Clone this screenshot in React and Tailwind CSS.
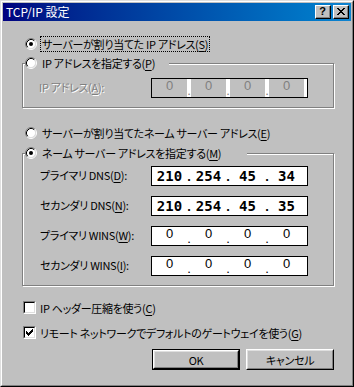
import React, { Fragment } from "react";

const JP = "font-['Noto_Sans_CJK_JP',sans-serif] [font-feature-settings:'palt']";

function U({ children }) {
  return <span className="underline decoration-1 underline-offset-[2px]">{children}</span>;
}

function Radio({ checked }) {
  return (
    <svg width="12" height="12" viewBox="0 0 12 12" className="shrink-0 block">
      <circle cx="6" cy="6" r="4.6" fill="#fff" />
      <path d="M2.11 9.89 A5.5 5.5 0 0 1 9.89 2.11" stroke="#808080" fill="none" />
      <path d="M9.89 2.11 A5.5 5.5 0 0 1 2.11 9.89" stroke="#fff" fill="none" />
      <path d="M2.82 9.18 A4.5 4.5 0 0 1 9.18 2.82" stroke="#000" fill="none" />
      <path d="M9.18 2.82 A4.5 4.5 0 0 1 2.82 9.18" stroke="#dfdfdf" fill="none" />
      {checked && <circle cx="6" cy="6" r="2" fill="#000" />}
    </svg>
  );
}

function CheckBox({ checked }) {
  const tops = [2, 3, 4, 3, 2, 1, 0];
  return (
    <div className="w-[13px] h-[13px] shrink-0 border border-t-[#808080] border-l-[#808080] border-r-white border-b-white">
      <div className="w-full h-full border border-t-black border-l-black border-r-[#dfdfdf] border-b-[#dfdfdf] bg-white flex items-center justify-center">
        {checked && (
          <svg width="7" height="7" viewBox="0 0 7 7" shapeRendering="crispEdges" className="block">
            {tops.map((t, i) => (
              <rect key={i} x={i} y={t} width="1" height="3" fill="#000" />
            ))}
          </svg>
        )}
      </div>
    </div>
  );
}

function CapBtn({ children, className = "" }) {
  return (
    <div className={`w-[16px] h-[14px] shrink-0 bg-[#c0c0c0] border border-t-white border-l-white border-r-black border-b-black ${className}`}>
      <div className="w-full h-full border-r border-b border-r-[#808080] border-b-[#808080] flex items-center justify-center">
        {children}
      </div>
    </div>
  );
}

function XIcon() {
  const rows = [
    [0, 1, 6, 7],
    [1, 2, 5, 6],
    [2, 3, 4, 5],
    [3, 4],
    [2, 3, 4, 5],
    [1, 2, 5, 6],
    [0, 1, 6, 7],
  ];
  return (
    <svg width="8" height="7" viewBox="0 0 8 7" shapeRendering="crispEdges" className="block">
      {rows.map((r, y) =>
        r.map((x) => <rect key={`${x}-${y}`} x={x} y={y} width="1" height="1" fill="#000" />)
      )}
    </svg>
  );
}

function Btn({ children, def }) {
  const body = (
    <div className="w-full h-full border border-t-white border-l-white border-r-black border-b-black">
      <div className="w-full h-full border border-t-[#dfdfdf] border-l-[#dfdfdf] border-r-[#808080] border-b-[#808080] flex items-center justify-center">
        {children}
      </div>
    </div>
  );
  return def ? (
    <div className="w-[88px] h-[21px] shrink-0 border border-black">{body}</div>
  ) : (
    <div className="w-[88px] h-[21px] shrink-0">{body}</div>
  );
}

function IPField({ vals, kind }) {
  const disabled = kind === "disabled";
  const dns = kind === "dns";
  const segBg = disabled ? "bg-[#c0c0c0]" : "bg-white";
  const color = disabled ? "text-[#808080]" : "text-black";
  const segText = dns
    ? "font-['DejaVu_Sans_Mono',monospace] font-bold text-[14px] leading-[14px] items-end pb-[2px] text-black"
    : `font-['Liberation_Sans',sans-serif] text-[13px] leading-[13px] items-start ${color}`;
  const dotText = dns
    ? "font-['Liberation_Sans',sans-serif] font-bold text-[13px] leading-[13px] pb-[2px] text-black"
    : `font-['Liberation_Sans',sans-serif] text-[13px] leading-[13px] ${color}`;
  return (
    <div className="w-[157px] h-[20px] shrink-0 border border-black bg-white flex overflow-hidden tracking-normal">
      {vals.map((v, i) => (
        <Fragment key={i}>
          <div className={`w-[35px] shrink-0 h-full flex justify-center ${segBg} ${segText}`}>{v}</div>
          {i < 3 && (
            <div className={`w-[4px] shrink-0 h-full bg-white flex items-end justify-center ${dotText}`}>.</div>
          )}
        </Fragment>
      ))}
    </div>
  );
}

function Label({ children }) {
  return <div className="h-[20px] flex items-center pb-[2px] whitespace-nowrap">{children}</div>;
}

function Group({ legendWidth, legend, children, className = "", contentClass = "" }) {
  return (
    <div className={`border border-[#808080] shadow-[inset_1px_1px_0_#fff,1px_1px_0_#fff] ${className}`}>
      <div className="-mt-[9px] ml-[2px] h-[16px] bg-[#c0c0c0] flex items-center whitespace-nowrap" style={{ width: legendWidth }}>
        {legend}
      </div>
      <div className={contentClass}>{children}</div>
    </div>
  );
}

export default function App() {
  return (
    <div
      className={`w-[354px] h-[387px] bg-[#c0c0c0] text-[11px] leading-[14px] tracking-[-0.3px] text-black ${JP} border border-t-[#dfdfdf] border-l-[#dfdfdf] border-r-black border-b-black overflow-hidden`}
    >
      <div className="h-full flex flex-col border border-t-white border-l-white border-r-[#808080] border-b-[#808080] p-px">
        {/* Title bar */}
        <div className="h-[18px] shrink-0 flex items-center bg-linear-to-r from-[#000080] to-[#1084d0] pl-[3px] pr-[2px]">
          <span className="text-white flex-1 text-[12px] tracking-normal leading-[14px]">TCP/IP 設定</span>
          <CapBtn>
            <span className="font-['Liberation_Sans',sans-serif] font-bold text-[11px] leading-none text-black">?</span>
          </CapBtn>
          <CapBtn className="ml-[2px]">
            <XIcon />
          </CapBtn>
        </div>

        {/* Body */}
        <div className="flex flex-col pl-[19px] pr-[17px] pt-[15px]">
          <div className="h-[16px] flex items-center ml-[3px] whitespace-nowrap">
            <Radio checked />
            <div className="ml-[3px] h-[16px] px-[1px] border border-dotted border-black flex items-center">
              サーバーが割り当てた IP アドレス(<U>S</U>)
            </div>
          </div>

          <Group
            className="mt-[11px]"
            legendWidth={144}
            legend={
              <>
                <Radio />
                <span className="ml-[5px]">
                  IP アドレスを指定する(<U>P</U>)
                </span>
              </>
            }
            contentClass="pt-[7px] pb-[9px] pl-[16px] flex"
          >
            <div className="w-[112px] shrink-0">
              <Label>
                <span className="text-[#808080] [text-shadow:1px_1px_0_#fff]">
                  IP アドレス(<U>A</U>):
                </span>
              </Label>
            </div>
            <IPField vals={["0", "0", "0", "0"]} kind="disabled" />
          </Group>

          <div className="h-[16px] flex items-center ml-[3px] mt-[17px] whitespace-nowrap">
            <Radio />
            <span className="ml-[5px]">
              サーバーが割り当てたネーム サーバー アドレス(<U>E</U>)
            </span>
          </div>

          <Group
            className="mt-[12px]"
            legendWidth={222}
            legend={
              <>
                <Radio checked />
                <span className="ml-[5px]">
                  ネーム サーバー アドレスを指定する(<U>M</U>)
                </span>
              </>
            }
            contentClass="pt-[5px] pb-[9px] pl-[17px] flex"
          >
            <div className="w-[111px] shrink-0 flex flex-col gap-[10px]">
              <Label>プライマリ DNS(<U>D</U>):</Label>
              <Label>セカンダリ DNS(<U>N</U>):</Label>
              <Label>プライマリ WINS(<U>W</U>):</Label>
              <Label>セカンダリ WINS(<U>I</U>):</Label>
            </div>
            <div className="w-[157px] shrink-0 flex flex-col gap-[10px]">
              <IPField vals={["210", "254", "45", "34"]} kind="dns" />
              <IPField vals={["210", "254", "45", "35"]} kind="dns" />
              <IPField vals={["0", "0", "0", "0"]} kind="zero" />
              <IPField vals={["0", "0", "0", "0"]} kind="zero" />
            </div>
          </Group>

          <div className="h-[15px] flex items-center ml-[1px] mt-[14px] whitespace-nowrap">
            <CheckBox />
            <span className="ml-[4px]">
              IP ヘッダー圧縮を使う(<U>C</U>)
            </span>
          </div>
          <div className="h-[15px] flex items-center ml-[1px] mt-[10px] whitespace-nowrap">
            <CheckBox checked />
            <span className="ml-[4px]">
              リモート ネットワークでデフォルトのゲートウェイを使う(<U>G</U>)
            </span>
          </div>

          <div className="flex justify-end gap-[6px] mt-[9px]">
            <Btn def>OK</Btn>
            <Btn>キャンセル</Btn>
          </div>
        </div>
      </div>
    </div>
  );
}
